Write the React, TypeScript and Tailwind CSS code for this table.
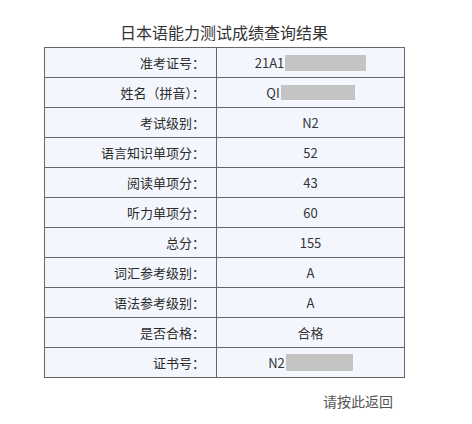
import React from 'react';

type Row = { label: string; value: string; mask?: { w: number; h: number } };

const rows: Row[] = [
  { label: '准考证号：', value: '21A1', mask: { w: 81, h: 16 } },
  { label: '姓名（拼音）：', value: 'QI', mask: { w: 74, h: 15 } },
  { label: '考试级别：', value: 'N2' },
  { label: '语言知识单项分：', value: '52' },
  { label: '阅读单项分：', value: '43' },
  { label: '听力单项分：', value: '60' },
  { label: '总分：', value: '155' },
  { label: '词汇参考级别：', value: 'A' },
  { label: '语法参考级别：', value: 'A' },
  { label: '是否合格：', value: '合格' },
  { label: '证书号：', value: 'N2', mask: { w: 67, h: 17 } },
];

export default function App() {
  return <div className="w-[472px] h-[424px] bg-white font-['Noto_Sans_CJK_SC',sans-serif] text-[#333]">
      <div className="ml-[44px] w-[360px] pt-[20px]">
        {/* Title */}
        <h1 className="h-[24px] leading-[24px] text-center text-[16px] text-[#333] mb-[3px]">
          日本语能力测试成绩查询结果
        </h1>

        {/* Result table */}
        <table className="w-[360px] border-collapse table-fixed">
          <colgroup>
            <col className="w-[172px]" />
            <col className="w-[188px]" />
          </colgroup>
          <tbody>
            {rows.map(r => <tr key={r.label}>
                <td className="border border-[#666] bg-[#f3f7fd] p-0">
                  <div className="h-[29px] flex items-center justify-end pr-[11px] text-[13px] text-[#2b2b2b]">
                    {r.label}
                  </div>
                </td>
                <td className="border border-[#666] bg-[#f3f7fd] p-0">
                  <div className="h-[29px] flex items-center justify-center text-[13px]">
                    <span>{r.value}</span>
                    {r.mask && <span className="block bg-[#c4c4c4] ml-[1px]" style={{
                  width: r.mask.w,
                  height: r.mask.h
                }} />}
                  </div>
                </td>
              </tr>)}
          </tbody>
        </table>

        <div className="mt-[13px] text-right pr-[11px] text-[14px] leading-[20px] text-[#555]">
          请按此返回
        </div>
      </div>
    </div>;
}
